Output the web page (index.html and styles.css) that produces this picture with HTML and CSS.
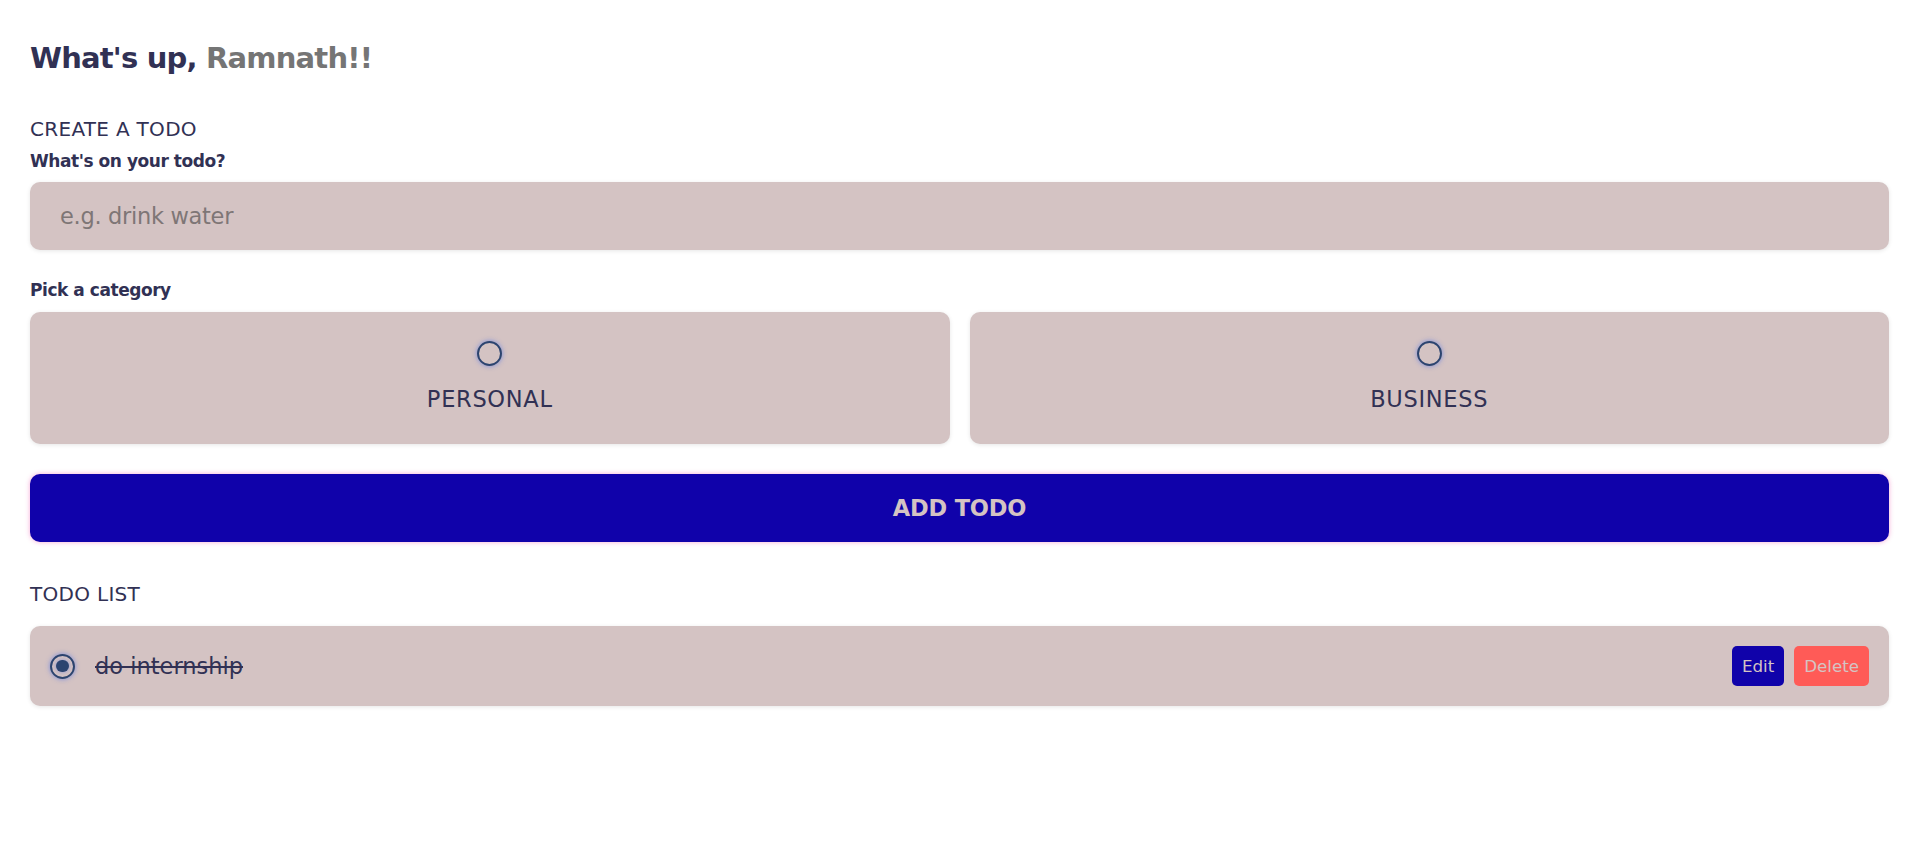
FILE: index.html
```html
<!DOCTYPE html>
<html lang="en">
<head>
<meta charset="utf-8">
<title>Todo</title>
<link rel="stylesheet" href="styles.css">
</head>
<body>
<main class="app">
  <section class="greeting">
    <h2 class="title">What's up, <span class="name">Ramnath!!</span></h2>
  </section>

  <section class="create-todo">
    <h3>CREATE A TODO</h3>
    <form class="create-form">
      <h4>What's on your todo?</h4>
      <input class="todo-input" type="text" placeholder="e.g. drink water">

      <h4>Pick a category</h4>
      <div class="options">
        <label class="option">
          <span class="bubble"></span>
          <div class="option-text">PERSONAL</div>
        </label>
        <label class="option">
          <span class="bubble"></span>
          <div class="option-text">BUSINESS</div>
        </label>
      </div>

      <button class="submit" type="button">ADD TODO</button>
    </form>
  </section>

  <section class="todo-list">
    <h3>TODO LIST</h3>
    <div class="list">
      <div class="todo-item done">
        <label class="check">
          <span class="bubble checked"></span>
        </label>
        <div class="todo-content">do internship</div>
        <div class="actions">
          <button class="edit" type="button">Edit</button>
          <button class="delete" type="button">Delete</button>
        </div>
      </div>
    </div>
  </section>
</main>
</body>
</html>
```

FILE: styles.css
```css
* {
  box-sizing: border-box;
  margin: 0;
  padding: 0;
  font-family: "DejaVu Sans", "Noto Sans", sans-serif;
}

body {
  background: #ffffff;
  color: #313154;
}

section {
  margin: 40px 0;
  padding: 0 30px;
}

h3 {
  color: #313154;
  font-size: 20px;
  font-weight: 400;
  line-height: 24.4px;
  letter-spacing: 0.3px;
  margin-bottom: 10px;
}

h4 {
  color: #313154;
  font-size: 17px;
  font-weight: 700;
  line-height: 21.3px;
  letter-spacing: -0.45px;
  margin-bottom: 10px;
}

.title {
  display: flex;
  font-size: 29px;
  font-weight: 700;
  line-height: 36.6px;
  letter-spacing: -0.8px;
  color: #313154;
  white-space: pre;
}

.title .name {
  color: #757575;
}

.todo-input {
  display: block;
  width: 100%;
  height: 68px;
  font-size: 22.5px;
  letter-spacing: -0.3px;
  padding: 0 30px;
  color: #313154;
  background: #d4c3c3;
  border: none;
  outline: none;
  border-radius: 10px;
  box-shadow: 0 1px 4px rgba(0, 0, 0, 0.1);
  margin-bottom: 30px;
}

.todo-input::placeholder {
  color: #7e7676;
}

.options {
  display: grid;
  grid-template-columns: repeat(2, 1fr);
  gap: 20px;
  margin-bottom: 30px;
}

.option {
  display: flex;
  flex-direction: column;
  align-items: center;
  justify-content: center;
  height: 132px;
  background: #d4c3c3;
  border-radius: 10px;
  box-shadow: 0 1px 4px rgba(0, 0, 0, 0.1);
}

.bubble {
  display: flex;
  align-items: center;
  justify-content: center;
  width: 25px;
  height: 25px;
  border-radius: 50%;
  border: 2.5px solid #2c4470;
  box-shadow: 0 0 5px rgba(58, 100, 238, 0.6);
}

.bubble.checked::after {
  content: "";
  width: 12.5px;
  height: 12.5px;
  border-radius: 50%;
  background: #2c4470;
  box-shadow: 0 0 4px rgba(58, 100, 238, 0.5);
}

.option-text {
  color: #313154;
  font-size: 22.5px;
  line-height: 27.4px;
  letter-spacing: 0.7px;
  margin-top: 20px;
}

.submit {
  display: block;
  width: 100%;
  height: 68px;
  border: none;
  font-size: 22.5px;
  font-weight: 700;
  letter-spacing: -0.2px;
  color: #d4c3c3;
  background: #1002aa;
  border-radius: 10px;
  box-shadow: 0 0 5px rgba(234, 64, 164, 0.45);
}

.list {
  margin: 20px 0;
}

.todo-item {
  display: flex;
  align-items: center;
  height: 80px;
  padding: 0 20px;
  background: #d4c3c3;
  border-radius: 10px;
  box-shadow: 0 1px 4px rgba(0, 0, 0, 0.1);
}

.check {
  display: block;
  margin-right: 20px;
}

.todo-content {
  flex: 1 1 0%;
  font-size: 22.5px;
  color: #313154;
}

.todo-item.done .todo-content {
  text-decoration: line-through;
}

.actions {
  display: flex;
  align-items: center;
  gap: 10px;
}

.actions button {
  display: block;
  height: 40px;
  padding: 0 10px;
  border: none;
  border-radius: 5px;
  font-size: 16.67px;
  color: #d4c3c3;
}

.actions .edit {
  background: #1002aa;
}

.actions .delete {
  background: #ff5b57;
}
```
